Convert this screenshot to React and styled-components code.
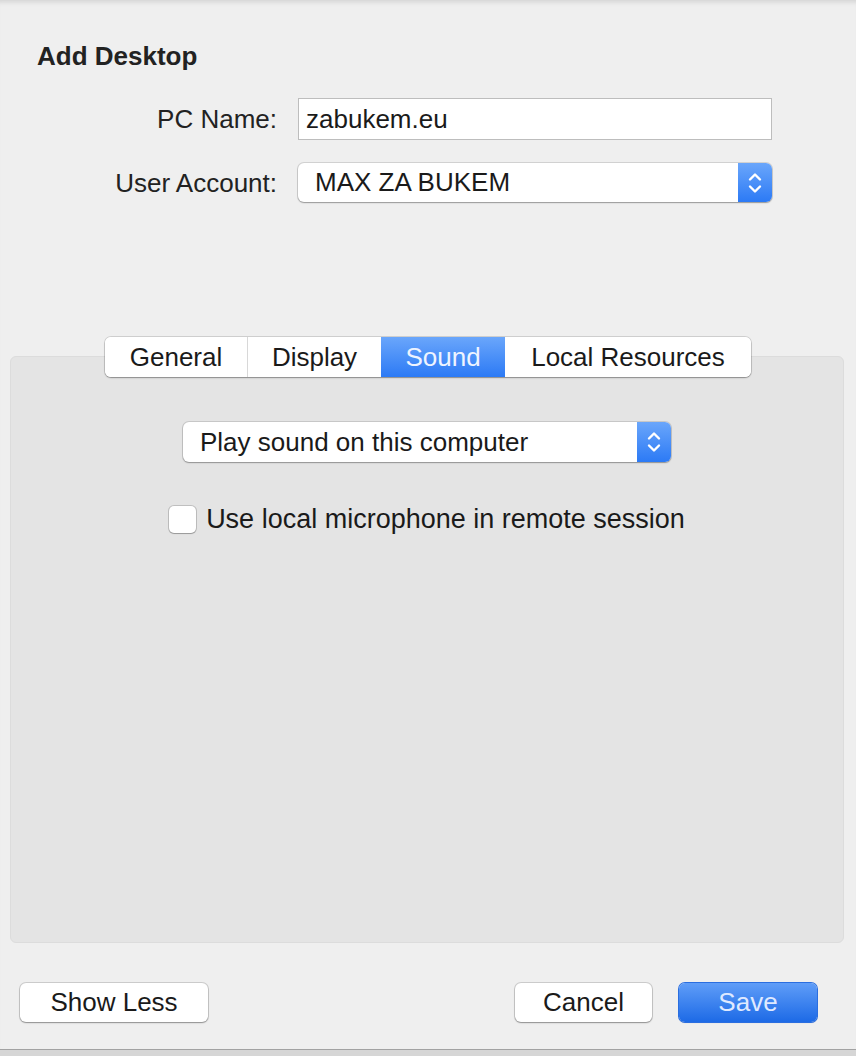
import React from 'react';
import styled, { createGlobalStyle } from 'styled-components';

const GlobalStyle = createGlobalStyle`
  html, body {
    margin: 0;
    padding: 0;
    background: #d6d6d6;
  }
  body {
    font-family: "Liberation Sans", Arial, sans-serif;
    color: #1e1e1e;
  }
`;

const Window = styled.div`
  width: 856px;
  height: 1050px;
  background: #efefef;
  border-bottom: 1px solid #a2a2a2;
  box-shadow: inset 0 6px 5px -4px rgba(0, 0, 0, 0.12);
  display: flex;
  flex-direction: column;
  box-sizing: border-box;
`;

const Title = styled.h1`
  margin: 41px 0 0 37px;
  font-size: 26px;
  font-weight: bold;
  line-height: 30px;
  color: #222;
`;

const Form = styled.div`
  display: grid;
  grid-template-columns: 277px 474px;
  column-gap: 21px;
  row-gap: 23px;
  margin-top: 27px;
  align-items: center;
`;

const Label = styled.label`
  text-align: right;
  font-size: 26px;
  line-height: 30px;
  color: #222;
`;

const TextInput = styled.div`
  height: 42px;
  box-sizing: border-box;
  border: 1px solid #bdbdbd;
  background: #fff;
  padding-left: 7px;
  display: flex;
  align-items: center;
  font-size: 26px;
  color: #1a1a1a;
`;

const Popup = styled.div`
  width: ${p => p.width}px;
  height: ${p => p.height}px;
  box-sizing: border-box;
  border-radius: 6px;
  background: #fff;
  box-shadow: 0 0 0 1px rgba(0, 0, 0, 0.12), 0 1px 1.5px rgba(0, 0, 0, 0.28);
  display: flex;
  align-items: center;
  overflow: hidden;
  font-size: 26px;
  color: #1a1a1a;
`;

const PopupText = styled.span`
  flex: 1;
  padding-left: ${p => p.indent}px;
  white-space: nowrap;
`;

const Stepper = styled.div`
  width: 34px;
  align-self: stretch;
  background: linear-gradient(#6aa6fb, #2c7af5);
  display: flex;
  align-items: center;
  justify-content: center;
`;

const TabArea = styled.div`
  margin-top: 135px;
  display: flex;
  flex-direction: column;
  align-items: center;
`;

const TabBar = styled.div`
  display: flex;
  height: 40px;
  border-radius: 6px;
  background: #fff;
  box-shadow: 0 0 0 1px rgba(0, 0, 0, 0.13), 0 1px 1.5px rgba(0, 0, 0, 0.3);
  overflow: hidden;
  margin-bottom: -21px;
  position: relative;
  z-index: 1;
`;

const Tab = styled.div`
  width: ${p => p.width}px;
  display: flex;
  align-items: center;
  justify-content: center;
  font-size: 26px;
  color: ${p => (p.active ? '#eef4ff' : '#1a1a1a')};
  background: ${p => (p.active ? 'linear-gradient(#6aa6fb, #2c7af5)' : '#fff')};
  border-left: ${p => (p.first || p.active || p.afterActive ? 'none' : '1px solid #d8d8d8')};
  box-sizing: border-box;
`;

const Panel = styled.div`
  align-self: stretch;
  margin: 0 12px 0 10px;
  height: 587px;
  box-sizing: border-box;
  background: #e4e4e4;
  border: 1px solid #dcdcdc;
  border-radius: 6px;
  display: flex;
  flex-direction: column;
  align-items: center;
  padding-top: 65px;
`;

const CheckRow = styled.label`
  display: flex;
  align-items: center;
  gap: 10px;
  margin-top: 42px;
  font-size: 27px;
  line-height: 30px;
  color: #1a1a1a;
`;

const CheckBox = styled.span`
  width: 27px;
  height: 27px;
  box-sizing: border-box;
  border-radius: 5px;
  background: #fff;
  box-shadow: 0 0 0 1px rgba(0, 0, 0, 0.16), 0 1px 1px rgba(0, 0, 0, 0.2);
`;

const Footer = styled.div`
  display: flex;
  align-items: center;
  margin-top: 40px;
  padding: 0 39px 0 20px;
`;

const Spacer = styled.div`
  flex: 1;
`;

const Button = styled.button`
  width: ${p => p.width}px;
  height: 39px;
  margin-left: ${p => p.gap || 0}px;
  border: none;
  border-radius: 6px;
  font-family: inherit;
  font-size: 26px;
  padding: 0;
  color: ${p => (p.primary ? '#dfe9ff' : '#1a1a1a')};
  background: ${p => (p.primary ? 'linear-gradient(#5f9df8, #1d6ae6)' : '#fff')};
  box-shadow: ${p =>
    p.primary
      ? '0 0 0 1px #2a6ee0, 0 1px 1px rgba(0,0,0,0.2)'
      : '0 0 0 1px rgba(0,0,0,0.14), 0 1px 1.5px rgba(0,0,0,0.3)'};
`;

const Arrows = () => (
  <svg width="16" height="26" viewBox="0 0 16 26" fill="none" stroke="#fff" strokeWidth="2.4" strokeLinecap="round" strokeLinejoin="round">
    <path d="M3 9.5 L8 4.5 L13 9.5" />
    <path d="M3 16.5 L8 21.5 L13 16.5" />
  </svg>
);

const tabs = [
  { name: 'General', width: 142 },
  { name: 'Display', width: 134 },
  { name: 'Sound', width: 124, active: true },
  { name: 'Local Resources', width: 246 },
];

export default function App() {
  return (
    <>
      <GlobalStyle />
      <Window>
        <Title>Add Desktop</Title>
        <Form>
          <Label>PC Name:</Label>
          <TextInput>zabukem.eu</TextInput>
          <Label>User Account:</Label>
          <Popup width={474} height={39}>
            <PopupText indent={17}>MAX ZA BUKEM</PopupText>
            <Stepper><Arrows /></Stepper>
          </Popup>
        </Form>
        <TabArea>
          <TabBar>
            {tabs.map((t, i) => (
              <Tab
                key={t.name}
                width={t.width}
                active={t.active}
                first={i === 0}
                afterActive={i > 0 && tabs[i - 1].active}
              >
                {t.name}
              </Tab>
            ))}
          </TabBar>
          <Panel>
            <Popup width={488} height={40}>
              <PopupText indent={17}>Play sound on this computer</PopupText>
              <Stepper><Arrows /></Stepper>
            </Popup>
            <CheckRow>
              <CheckBox />
              Use local microphone in remote session
            </CheckRow>
          </Panel>
        </TabArea>
        <Footer>
          <Button width={188}>Show Less</Button>
          <Spacer />
          <Button width={137}>Cancel</Button>
          <Button width={138} gap={27} primary>Save</Button>
        </Footer>
      </Window>
    </>
  );
}
